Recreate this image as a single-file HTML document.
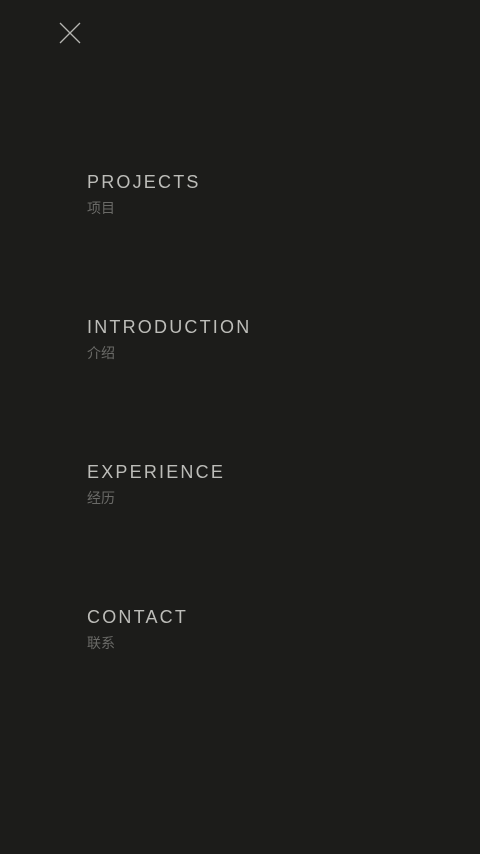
<!DOCTYPE html>
<html><head><meta charset="utf-8"><style>
html,body{margin:0;padding:0;background:#1c1c1a;width:480px;height:854px;overflow:hidden}
.t{position:absolute;left:87px;font-family:"Liberation Sans",sans-serif;font-size:18px;letter-spacing:2.2px;color:#bdbdb9;font-weight:normal;line-height:20px}
.c{position:absolute;left:87px;font-family:"Liberation Sans","Noto Sans CJK SC",sans-serif;font-size:14px;color:#6a6a67;line-height:16px}
</style></head><body>
<svg style="position:absolute;left:0;top:0" width="100" height="60"><path d="M60 23 L80 43 M80 23 L60 43" stroke="#b5b5b1" stroke-width="1.3" fill="none"/></svg>
<div class="t" style="top:172px">PROJECTS</div><div class="c" style="top:200px">项目</div>
<div class="t" style="top:317px">INTRODUCTION</div><div class="c" style="top:345px">介绍</div>
<div class="t" style="top:462px">EXPERIENCE</div><div class="c" style="top:490px">经历</div>
<div class="t" style="top:607px">CONTACT</div><div class="c" style="top:635px">联系</div>
</body></html>
